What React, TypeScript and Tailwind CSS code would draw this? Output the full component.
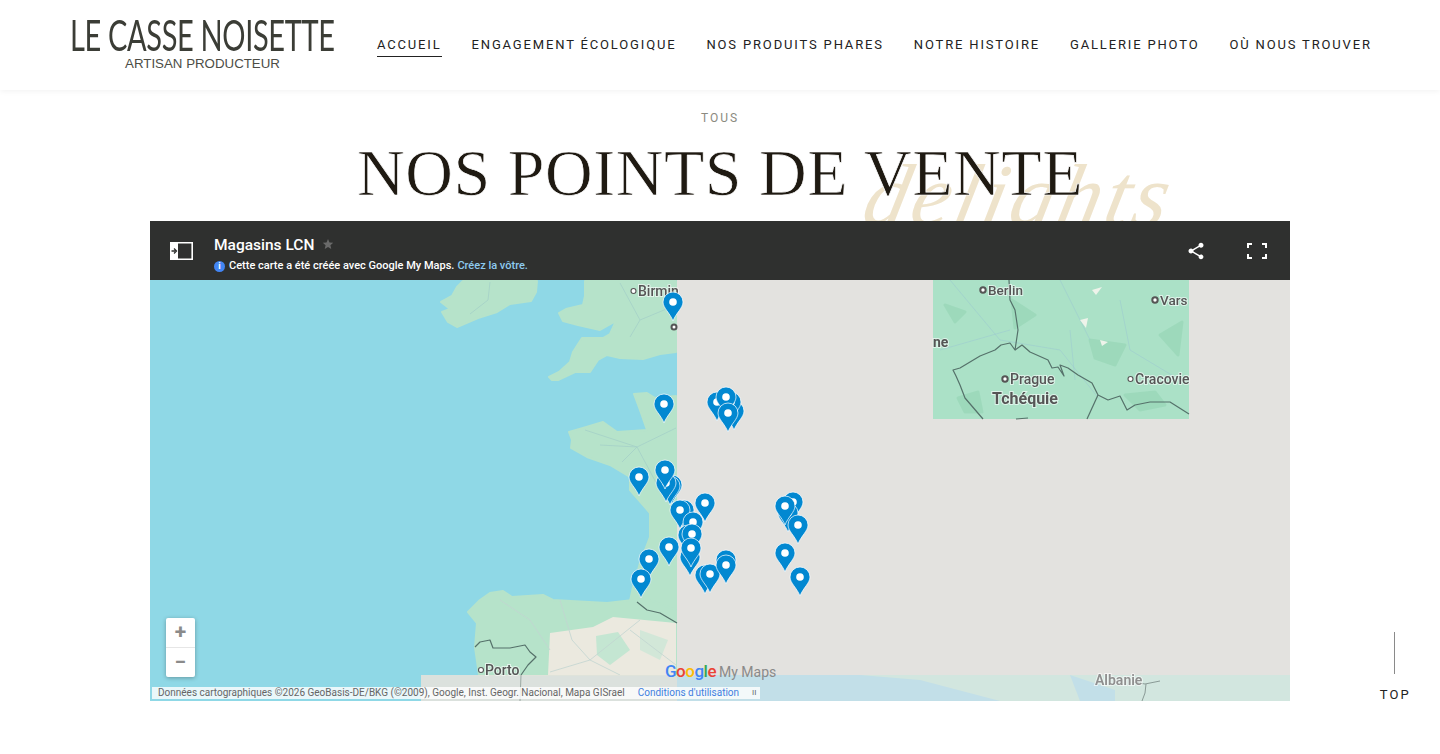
import React from 'react';

const navItems = ['ACCUEIL', 'ENGAGEMENT ÉCOLOGIQUE', 'NOS PRODUITS PHARES', 'NOTRE HISTOIRE', 'GALLERIE PHOTO', 'OÙ NOUS TROUVER'];

// head centre of each marker, back to front
const pins: [number, number][] = [
  [673, 302], [664, 404], [717, 402], [734, 411], [731, 402], [726, 397], [728, 413],
  [672, 485], [670, 486], [666, 483], [665, 470], [639, 477], [705, 503], [684, 510], [680, 510],
  [693, 522], [688, 535], [692, 534], [690, 557], [691, 548], [669, 547], [649, 559], [641, 579],
  [705, 575], [710, 574], [726, 560], [726, 565], [793, 502], [788, 513], [798, 525], [785, 506],
  [785, 553], [800, 577],
];

const Pin = ({ x, y }: { x: number; y: number }) => (
  <g transform={`translate(${x} ${y})`}>
    <path d="M0 19C-3 11-10 6-10 0A10 10 0 1 1 10 0C10 6 3 11 0 19Z" fill="#0288d1" stroke="#ffffff" strokeOpacity="0.7" strokeWidth="1" />
    <circle r="3.8" fill="#ffffff" />
  </g>
);

const MapDrawing = () => (
  <svg viewBox="150 280 1140 421" className="block w-full h-[421px] blur-[0.4px]" style={{ fontFamily: 'Roboto, sans-serif' }}>
    <rect x="150" y="280" width="1140" height="421" fill="#8fd8e6" />
    {/* terre */}
    <g fill="#b6e3ca" stroke="#b6e3ca" strokeWidth="2" strokeLinejoin="round">
      <path d="M463 281L537 281L536 292L531 301L510 304L497 312L478 318L457 327L448 322L442 312L450 309L441 302L452 296L457 287Z" />
      <path d="M585 281L585 296L583 305L566 309L559 313L563 321L578 325L600 330L616 321L610 334L603 338L582 338L573 352L570 362L559 372L549 377L552 380L558 380L575 372L590 372L598 360L607 355L620 358L643 359L660 354L676 352L676 281Z" />
      <path d="M634 394L647 393L655 398L676 396L676 675L630 675L630 601L633 587L640 563L650 537L650 513L630 490L630 477L610 465L587 457L571 448L572 440L569 432L583 428L603 422L617 432L647 430L640 410Z" />
      <path d="M468 612L480 600L490 593L503 591L512 597L543 595L553 600L607 603L633 600L650 600L676 610L676 675L479 675L475 647L477 623Z" />
    </g>
    <path d="M550 633L593 627L613 617L676 623L676 675L548 675Z" fill="#ebe9df" />
    <path d="M596 636L618 632L630 650L610 665L597 655Z" fill="#c4e6d2" />
    <path d="M640 630L668 640L660 660L640 650Z" fill="#d2e7d8" />
    <g fill="none" stroke="#a5d0c8" strokeWidth="0.8">
      <path d="M490 282L488 300L470 314" />
      <path d="M620 283L640 320L630 337M640 320L676 305" />
      <path d="M585 430L637 447L676 428M637 447L622 462M637 447L660 490M600 445L637 447" />
      <path d="M500 600L530 620L550 650M560 600L572 640L590 660L640 620" stroke="#c2d4d0" />
      <path d="M550 672L590 660L620 675M630 630L676 665" stroke="#c2d4d0" />
    </g>
    {/* tuiles non chargées */}
    <rect x="677" y="280" width="613" height="395" fill="#e3e2df" />
    <rect x="933" y="280" width="256" height="139" fill="#abe1c7" />
    <g fill="#93d4b3" opacity="0.55" stroke="#93d4b3" strokeWidth="3" strokeLinejoin="round">
      <path d="M945 305L965 312L955 322Z" />
      <path d="M1012 300L1035 315L1015 328Z" />
      <path d="M1090 340L1125 345L1115 365L1095 358Z" />
      <path d="M1160 335L1182 322L1178 355Z" />
      <path d="M958 398L978 392L982 412L965 412Z" />
      <path d="M1125 395L1155 392L1165 405L1140 410Z" />
    </g>
    <g fill="none" stroke="#9cc9d0" strokeWidth="0.7" opacity="0.8">
      <path d="M950 280L1000 340L1060 350L1100 400M1070 330L1075 380M1120 300L1130 350L1180 380M940 350L1010 330M1060 280L1090 340" />
    </g>
    <g fill="#eef3ea">
      <path d="M1092 290L1102 287L1096 295Z" />
      <path d="M1080 320L1088 318L1086 328Z" />
      <path d="M1100 340L1108 342L1102 346Z" />
    </g>
    <g fill="none" stroke="#55716a" strokeWidth="1.2" strokeLinejoin="round">
      <path d="M1009 280L1010 300L1015 310L1018 330L1015 350L1010 343L1001 345L995 350L980 356L960 368L953 370L956 376L960 385L965 398L983 419" />
      <path d="M1015 350L1022 345L1030 352L1048 360L1052 368L1058 367L1064 376L1060 365L1068 368L1078 375L1092 383L1098 395L1108 400L1120 396L1127 410L1135 405L1150 402L1170 402L1189 414" />
      <path d="M1098 395L1087 419" />
      <path d="M1016 419L1028 418" />
      <path d="M475 647L480 642L490 640L493 648L510 648L525 645L530 652L536 657L528 665L521 675" />
      <path d="M637 602L647 610L660 613L677 623" />
    </g>
    {/* bande basse */}
    <rect x="421" y="675" width="256" height="26" fill="#e3e2dc" opacity="0.9" />
    <rect x="677" y="675" width="613" height="26" fill="#d2e6df" />
    <path d="M677 675L860 675L920 680L1000 701L677 701ZM1070 675L1115 690L1115 701L1080 701Z" fill="#c2dfe8" />
    <path d="M521 675L520 701" fill="none" stroke="#8a9a96" strokeWidth="0.8" />
    <path d="M1133 682L1145 684L1160 681M1146 684L1145 693L1142 701" fill="none" stroke="#8a9a96" strokeWidth="1" />
    <g fill="#555" fontWeight="500" stroke="#ffffff" strokeWidth="2" paintOrder="stroke" strokeOpacity="0.6">
      <text x="638" y="296" fontSize="14">Birmin</text>
      <text x="988" y="294.500" fontSize="13.5">Berlin</text>
      <text x="1160" y="305" fontSize="13.5">Vars</text>
      <text x="933" y="347" fontWeight="700" fontSize="14">ne</text>
      <text x="1010" y="384" fontSize="14">Prague</text>
      <text x="1135" y="384" fontSize="14">Cracovie</text>
      <text x="992" y="404" fontWeight="700" fontSize="16">Tchéquie</text>
      <text x="485" y="675" fontSize="14">Porto</text>
      <text x="1095" y="685" fontWeight="600" fontSize="14" fill="#8f8f8f">Albanie</text>
    </g>
    <g fill="none" stroke="#555" strokeWidth="1.1">
      <circle cx="633.500" cy="291" r="2.500" fill="#fff" />
      <circle cx="674" cy="327" r="2.500" strokeWidth="2" fill="#fff" />
      <circle cx="983" cy="290" r="2.700" strokeWidth="2" fill="#fff" />
      <circle cx="1155" cy="300" r="2.700" strokeWidth="2" fill="#fff" />
      <circle cx="1005" cy="379" r="2.700" strokeWidth="2" fill="#fff" />
      <circle cx="1130.500" cy="379" r="2.500" fill="#fff" />
      <circle cx="481" cy="670" r="2.500" fill="#fff" />
    </g>
    {pins.map(([x, y], i) => (
      <Pin key={i} x={x} y={y} />
    ))}
  </svg>
);

export default function App() {
  return (
    <div className="relative h-[754px] overflow-hidden bg-white" style={{ fontFamily: 'Roboto, sans-serif' }}>
      <header className="h-[90px] flex items-center pl-[70px] shadow-[0_1px_6px_rgba(0,0,0,0.06)]">
        <div className="w-[307px] shrink-0 flex flex-col">
          <div className="h-[32px] whitespace-nowrap origin-left scale-x-[0.69] text-[42px] leading-[32px] font-normal text-[#3b3d36] tracking-[-0.5px]" style={{ fontFamily: 'Lato, sans-serif' }}>
            LE CASSE NOISETTE
          </div>
          <div className="w-[265px] text-center text-[13.3px] leading-[14px] mt-[6px] text-[#4c4d46]" style={{ fontFamily: '"Liberation Sans", sans-serif' }}>
            ARTISAN PRODUCTEUR
          </div>
        </div>
        <nav className="flex gap-[30px] text-[13px] tracking-[1.84px] text-[#222]">
          {navItems.map((item, i) => (
            <a key={item} className={i === 0 ? 'pb-[1px] border-b border-[#222] leading-[20px] mt-[2px]' : 'pb-[2px] leading-[20px] mt-[2px]'}>
              {item}
            </a>
          ))}
        </nav>
      </header>

      <main className="relative">
        <p className="pt-[20px] text-center text-[12px] leading-[16px] tracking-[2px] text-[#8b8a80]">TOUS</p>
        <div className="relative h-[95px]">
          <span className="absolute left-[866px] top-[30px] text-[88px] leading-[80px] italic text-[#eee3cb] whitespace-nowrap -skew-x-12 tracking-[3.5px]" style={{ fontFamily: '"Liberation Serif", serif' }}>
            delights
          </span>
          <h1 className="relative pt-[9px] text-center text-[66px] leading-[76px] text-[#1f1a12] tracking-[0.55px] whitespace-nowrap [-webkit-text-stroke:0.7px_white]" style={{ fontFamily: '"Liberation Serif", serif' }}>
            NOS POINTS DE VENTE
          </h1>
        </div>

        <section className="relative mx-[150px] h-[480px] overflow-hidden">
          <div className="relative h-[59px] bg-[#2f302f] flex items-center text-white">
            <svg viewBox="0 0 23 18" className="ml-[20px] w-[23px] h-[18px]">
              <path d="M0 0h8v18H0z" fill="#fff" />
              <path d="M8 .8h14.200v16.400H8" fill="none" stroke="#fff" strokeWidth="1.600" />
              <path d="M1.500 9h4M4 6.500L6.500 9 4 11.500" fill="none" stroke="#2f302f" strokeWidth="1.300" />
            </svg>
            <div className="ml-[21px] pt-[8px]">
              <div className="flex items-center h-[20px] -mt-[1px]">
                <span className="text-[15.5px] font-medium leading-[20px]">Magasins LCN</span>
                <svg viewBox="0 0 24 24" className="ml-[8px] -mt-[3px] w-[12px] h-[12px]" fill="#6a6a6a">
                  <path d="M12 2l3 7 7.500.600-5.700 4.900 1.700 7.300L12 18l-6.500 3.800 1.700-7.300L1.500 9.600 9 9z" />
                </svg>
              </div>
              <div className="flex items-center h-[14px] mt-[4px] text-[11px] font-medium whitespace-nowrap">
                <span className="w-[11px] h-[11px] rounded-full bg-[#4285f4] text-[9px] leading-[11px] font-bold text-center mr-[4px]">i</span>
                Cette carte a été créée avec Google My Maps.
                <span className="ml-[3px] text-[#8ecbf0]">Créez la vôtre.</span>
              </div>
            </div>
            <div className="ml-auto flex items-center gap-[41px] pr-[23px]">
              <svg viewBox="0 0 24 24" className="w-[20px] h-[20px]" fill="#fff">
                <path d="M18 16.080c-.76 0-1.440.3-1.960.77L8.910 12.700c.05-.23.09-.46.09-.7s-.04-.47-.09-.7l7.050-4.110c.54.5 1.250.81 2.040.81 1.660 0 3-1.340 3-3s-1.340-3-3-3-3 1.340-3 3c0 .24.04.47.09.7L8.040 9.810C7.500 9.310 6.790 9 6 9c-1.660 0-3 1.340-3 3s1.340 3 3 3c.79 0 1.500-.31 2.040-.81l7.120 4.160c-.05.21-.08.43-.08.65 0 1.610 1.310 2.920 2.920 2.920 1.610 0 2.920-1.310 2.920-2.920s-1.310-2.920-2.920-2.920z" />
              </svg>
              <svg viewBox="0 0 20 16" className="w-[20px] h-[16px]" fill="none" stroke="#fff" strokeWidth="2">
                <path d="M1 5V1h4M15 1h4v4M19 11v4h-4M5 15H1v-4" />
              </svg>
            </div>
          </div>

          <div className="relative">
            <MapDrawing />
            <div className="absolute left-[16px] top-[338px] w-[29px] h-[59px] bg-white rounded-[2px] shadow-[0_1px_4px_rgba(0,0,0,0.3)] flex flex-col text-[#8a8a8a] font-bold">
              <div className="h-[30px] flex items-center justify-center text-[21px] leading-none border-b border-[#e6e6e6]">+</div>
              <div className="h-[29px] flex items-center justify-center text-[21px] leading-none">−</div>
            </div>
            <div className="absolute left-[515px] top-[381px] flex items-baseline text-[17px] leading-[20px] whitespace-nowrap">
              <span className="font-medium tracking-[-0.5px]">
                <span className="text-[#4285f4]">G</span>
                <span className="text-[#ea4335]">o</span>
                <span className="text-[#fbbc05]">o</span>
                <span className="text-[#4285f4]">g</span>
                <span className="text-[#34a853]">l</span>
                <span className="text-[#ea4335]">e</span>
              </span>
              <span className="ml-[3px] text-[14px] text-[#8a8a8a]">My Maps</span>
            </div>
            <div className="absolute left-[2px] top-[407px] w-[608px] h-[12px] bg-white/80 flex items-center pl-[6px] text-[10px] leading-[12px] text-[#666] whitespace-nowrap">
              Données cartographiques ©2026 GeoBasis-DE/BKG (©2009), Google, Inst. Geogr. Nacional, Mapa GISrael
              <span className="ml-[13px] text-[#3f7fe0]">Conditions d'utilisation</span>
              <span className="ml-[13px] text-[8px]">II</span>
            </div>
          </div>
        </section>
      </main>

      <div className="absolute right-[31px] top-[632px] flex flex-col items-center">
        <div className="w-px h-[42px] bg-[#8a8a8a]" />
        <span className="mt-[13px] text-[13px] leading-[16px] tracking-[2.200px] text-[#222] -mr-[2px]">TOP</span>
      </div>
    </div>
  );
}
